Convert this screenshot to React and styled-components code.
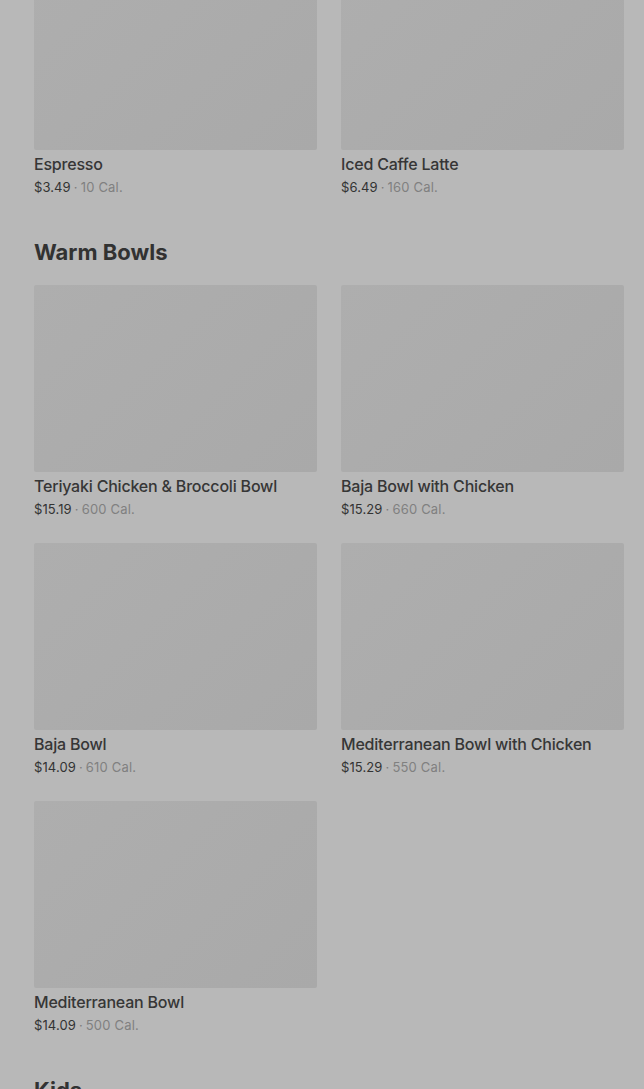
import styled, { createGlobalStyle } from 'styled-components';

const GlobalStyle = createGlobalStyle`
  html, body {
    margin: 0;
    padding: 0;
    background: #b8b8b8;
    overflow: hidden;
  }
  body {
    font-family: Inter, "Noto Sans", "Liberation Sans", sans-serif;
    color: #333333;
  }
`

const Page = styled.div`
  padding: 0 20px 0 34px;
  margin-top: -37px;
`
const Section = styled.section`
  display: flex;
  flex-direction: column;
`
const Heading = styled.h2`
  margin: 0;
  padding: 42px 0 19px;
  font-size: 22px;
  line-height: 28px;
  font-weight: 700;
  letter-spacing: 0;
  color: #323232;
`
const Grid = styled.div`
  display: grid;
  grid-template-columns: 1fr 1fr;
  column-gap: 24px;
  row-gap: 25px;
`
const Card = styled.div`
  display: flex;
  flex-direction: column;
`
const Thumb = styled.div`
  height: 187px;
  border-radius: 2px;
  background: linear-gradient(135deg, #aeaeae 0%, #ababab 60%, #a9a9a9 100%);
`
const Name = styled.div`
  margin-top: 4px;
  font-size: 16px;
  line-height: 20px;
  font-weight: 500;
  color: #363636;
  letter-spacing: -0.2px;
`
const Meta = styled.div`
  margin-top: 4px;
  font-size: 13px;
  line-height: 18px;
  color: #333333;
  letter-spacing: 0.1px;
`
const Dot = styled.span`
  margin: 0 3px;
  color: #7c7c7c;
`
const Cal = styled.span`
  color: #808080;
  letter-spacing: 0.2px;
`

const sections = [
  {
    items: [
      { name: 'Espresso', price: '$3.49', cal: '10 Cal.' },
      { name: 'Iced Caffe Latte', price: '$6.49', cal: '160 Cal.' },
    ],
  },
  {
    title: 'Warm Bowls',
    items: [
      { name: 'Teriyaki Chicken & Broccoli Bowl', price: '$15.19', cal: '600 Cal.' },
      { name: 'Baja Bowl with Chicken', price: '$15.29', cal: '660 Cal.' },
      { name: 'Baja Bowl', price: '$14.09', cal: '610 Cal.' },
      { name: 'Mediterranean Bowl with Chicken', price: '$15.29', cal: '550 Cal.' },
      { name: 'Mediterranean Bowl', price: '$14.09', cal: '500 Cal.' },
    ],
  },
  { title: 'Kids', items: [] },
]

export default function App() {
  return (
    <>
      <GlobalStyle />
      <Page>
        {sections.map((s, i) => (
          <Section key={i}>
            {s.title && <Heading>{s.title}</Heading>}
            <Grid>
              {s.items.map((it) => (
                <Card key={it.name}>
                  <Thumb />
                  <Name>{it.name}</Name>
                  <Meta>
                    {it.price}
                    <Dot>·</Dot>
                    <Cal>{it.cal}</Cal>
                  </Meta>
                </Card>
              ))}
            </Grid>
          </Section>
        ))}
      </Page>
    </>
  );
}
